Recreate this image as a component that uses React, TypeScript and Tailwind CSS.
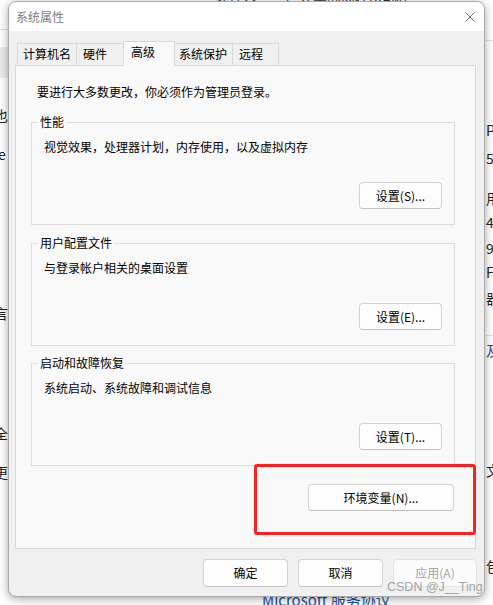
import clsx from "clsx";

function Btn({
  children,
  className,
  disabled,
}: {
  children: React.ReactNode;
  className?: string;
  disabled?: boolean;
}) {
  return (
    <button
      disabled={disabled}
      className={clsx(
        "flex items-center justify-center rounded-[4px] border leading-[16px]",
        disabled
          ? "border-[#e3e3e3] bg-[#fbfbfb] text-[#a3a3a3]"
          : "border-[#d2d2d2] border-b-[#c2c2c2] bg-[#fdfdfd] text-black",
        className
      )}
    >
      {children}
    </button>
  );
}

function Group({
  title,
  desc,
  button,
  className,
}: {
  title: string;
  desc: string;
  button: string;
  className?: string;
}) {
  return (
    <fieldset className={clsx("border border-[#dcdcdc]", className)}>
      <legend className="ml-[6px] px-[2px] leading-[16px]">{title}</legend>
      <div className="px-[12px] pb-[15px]">
        <p className="mt-[9px] leading-[16px]">{desc}</p>
        <div className="mt-[27px] flex justify-end">
          <Btn className="h-[27px] w-[83px]">{button}</Btn>
        </div>
      </div>
    </fieldset>
  );
}

const tabs = [
  { label: "计算机名", cls: "w-[60px] pl-[5px]" },
  { label: "硬件", cls: "w-[48px] pl-[6px]" },
  { label: "高级", cls: "w-[52px] pl-[7px]", active: true },
  { label: "系统保护", cls: "w-[59px] pl-[4px]" },
  { label: "远程", cls: "w-[47px] pl-[6px]" },
];

// page peeking out behind the dialog
function Backdrop() {
  return (
    <div className="flex h-full text-[14px] leading-[20px] text-[#222]">
      <div className="flex w-[8px] shrink-0 flex-col overflow-hidden">
        <div className="mt-[29px] h-px bg-[#dedede]" />
        <div className="mt-[17px] h-[31px] bg-[#ececec]" />
        <span className="-ml-[6px] mt-[27px]">也</span>
        <span className="-ml-[2px] mt-[19px]">e</span>
        <span className="-ml-[6px] mt-[139px]">言</span>
        <span className="-ml-[6px] mt-[100px]">全</span>
        <span className="-ml-[6px] mt-[19px]">更</span>
      </div>
      <div className="flex min-w-0 flex-1 flex-col">
        <span className="-mt-[12px] ml-[207px] whitespace-nowrap text-[#333]">
          处理器　　已安装的内存(RAM)
        </span>
        <span className="-mb-[5px] ml-[254px] mt-auto whitespace-nowrap text-[15px] text-[#1a4fa0]">
          Microsoft 服务协议
        </span>
      </div>
      <div className="flex w-[8px] shrink-0 flex-col overflow-hidden whitespace-nowrap pl-px">
        <div className="mt-[40px] h-px bg-[#e3e3e3]" />
        <span className="mt-[79px]">P</span>
        <span className="mt-[8px]">5-</span>
        <span className="mt-[20px]">用</span>
        <span className="mt-[4px]">46</span>
        <span className="mt-[6px]">9-</span>
        <span className="mt-[4px]">F</span>
        <span className="mt-[6px]">器</span>
        <div className="mt-[27px] h-px bg-[#e3e3e3]" />
        <span className="mt-[4px] text-[#1a4fa0]">及</span>
        <span className="mt-[100px]">文</span>
        <span className="mt-[76px]">包</span>
      </div>
    </div>
  );
}

export default function App() {
  return (
    <div className="relative h-[605px] w-[493px] overflow-hidden bg-white font-['Noto_Sans_CJK_SC',sans-serif] text-[12px] text-black">
      <Backdrop />

      {/* dialog window */}
      <div className="absolute left-[8px] top-[1px] z-10 flex h-[596px] w-[477px] flex-col overflow-hidden rounded-[8px] border border-[#a8a8a8] bg-[#f0f0f0] shadow-[0_2px_10px_rgba(0,0,0,0.35)]">
        <div className="flex h-[29px] shrink-0 items-center justify-between bg-white pl-[7px] pr-[9px]">
          <span className="leading-[16px] text-[#808080]">系统属性</span>
          <svg width="10" height="10" viewBox="0 0 10 10">
            <path d="M0.5 0.5L9.5 9.5M9.5 0.5L0.5 9.5" stroke="#6e6e6e" strokeWidth="1" />
          </svg>
        </div>

        <div className="flex flex-col pl-[6px] pr-[8px] pt-[10px]">
          <div className="flex items-end pl-[2px]">
            {tabs.map((t, i) => (
              <div
                key={t.label}
                className={clsx(
                  "border-l border-r border-t border-[#d9d9d9] pt-[2px] leading-[16px]",
                  i > 0 && "-ml-px",
                  t.active
                    ? "relative z-10 -mb-px h-[25px] bg-[#f9f9f9]"
                    : "h-[22px] bg-[#f0f0f0]",
                  t.cls
                )}
              >
                {t.label}
              </div>
            ))}
          </div>

          <div className="flex h-[484px] w-[461px] flex-col border border-[#d9d9d9] bg-[#f9f9f9] pl-[15px] pr-[20px] pt-[18px]">
            <p className="ml-[6px] leading-[16px]">要进行大多数更改，你必须作为管理员登录。</p>
            <Group
              className="mt-[14px]"
              title="性能"
              desc="视觉效果，处理器计划，内存使用，以及虚拟内存"
              button="设置(S)..."
            />
            <Group
              className="mt-[10px]"
              title="用户配置文件"
              desc="与登录帐户相关的桌面设置"
              button="设置(E)..."
            />
            <Group
              className="mt-[9px]"
              title="启动和故障恢复"
              desc="系统启动、系统故障和调试信息"
              button="设置(T)..."
            />
            <div className="mt-[18px] flex justify-end pr-[1px]">
              <Btn className="h-[27px] w-[146px]">环境变量(N)...</Btn>
            </div>
          </div>
        </div>

        <div className="mt-[10px] flex justify-end gap-[10px] pr-[7px]">
          <Btn className="h-[28px] w-[85px]">确定</Btn>
          <Btn className="h-[28px] w-[85px]">取消</Btn>
          <Btn className="h-[28px] w-[84px]" disabled>
            应用(A)
          </Btn>
        </div>
      </div>

      {/* red annotation box + watermark */}
      <div className="absolute left-[254px] top-[464px] z-20 h-[71px] w-[222px] rounded-[3px] border-[3px] border-[#ff1f1f]" />
      <span className="absolute left-[387px] top-[579px] z-20 font-['Liberation_Sans',sans-serif] text-[12.5px] leading-[16px] text-[#8c8c8c]/80">
        CSDN @J__Ting
      </span>
    </div>
  );
}
